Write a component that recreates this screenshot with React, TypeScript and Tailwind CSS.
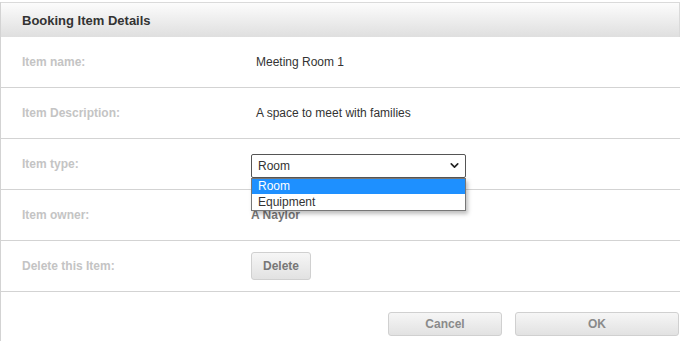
import { ChevronDown } from "lucide-react";

function Row({ label, children }: { label: string; children: React.ReactNode }) {
  return (
    <div className="h-[51px] border-b border-[#d3d3d3] flex items-center">
      <div className="w-[250px] pl-[21px] text-[12px] font-bold text-[#c4c4c4]">{label}</div>
      <div className="flex-1 flex items-center">{children}</div>
    </div>
  );
}

const App = () => {
  return (
    <div className="w-[680px] h-[341px] bg-white pt-[2px] font-['Liberation_Sans',Arial,sans-serif] overflow-hidden">
      <div className="h-[339px] border-l border-[#d3d3d3]">
        {/* Header */}
        <div className="h-[35px] border-t border-r border-[#dadada] bg-gradient-to-b from-[#fcfcfc] to-[#dfdfdf] flex items-center pl-[21px] pt-[1px]">
          <span className="text-[13px] font-bold text-[#333]">Booking Item Details</span>
        </div>

        <Row label="Item name:">
          <span className="pl-[5px] text-[12px] text-[#333]">Meeting Room 1</span>
        </Row>
        <Row label="Item Description:">
          <span className="pl-[5px] text-[12px] text-[#333]">A space to meet with families</span>
        </Row>
        <Row label="Item type:">
          <div className="relative mt-[3px]">
            <div className="w-[215px] h-[24px] border border-[#555] rounded-[2px] bg-white flex items-center justify-between pl-[6px] pr-[4px]">
              <span className="text-[12px] text-[#333]">Room</span>
              <ChevronDown className="w-[13px] h-[13px] text-[#222]" strokeWidth={3} />
            </div>
            {/* open dropdown list */}
            <div className="absolute left-0 top-[24px] z-10 w-[215px] border border-[#777] bg-white shadow-[2px_3px_4px_rgba(0,0,0,0.25)]">
              <div className="h-[15px] bg-[#1e90ff] text-white text-[12px] leading-[15px] pl-[6px]">Room</div>
              <div className="h-[16px] text-[#333] text-[12px] leading-[16px] pl-[6px]">Equipment</div>
            </div>
          </div>
        </Row>
        <Row label="Item owner:">
          <span className="text-[12px] font-bold text-[#777]">A Naylor</span>
        </Row>
        <Row label="Delete this Item:">
          <button className="w-[60px] h-[28px] rounded-[3px] border border-[#d0d0d0] bg-gradient-to-b from-[#f6f6f6] to-[#e2e2e2] text-[12px] font-bold text-[#777]">
            Delete
          </button>
        </Row>

        {/* Footer */}
        <div className="h-[47px] flex justify-end items-start pt-[20px] pr-[1px] gap-[13px]">
          <button className="w-[114px] h-[24px] rounded-[3px] border border-[#d0d0d0] bg-gradient-to-b from-[#f6f6f6] to-[#e2e2e2] text-[12px] font-bold text-[#8a8a8a]">
            Cancel
          </button>
          <button className="w-[164px] h-[24px] rounded-[3px] border border-[#d0d0d0] bg-gradient-to-b from-[#f6f6f6] to-[#e2e2e2] text-[12px] font-bold text-[#8a8a8a]">
            OK
          </button>
        </div>
      </div>
    </div>
  );
};

export default App;
